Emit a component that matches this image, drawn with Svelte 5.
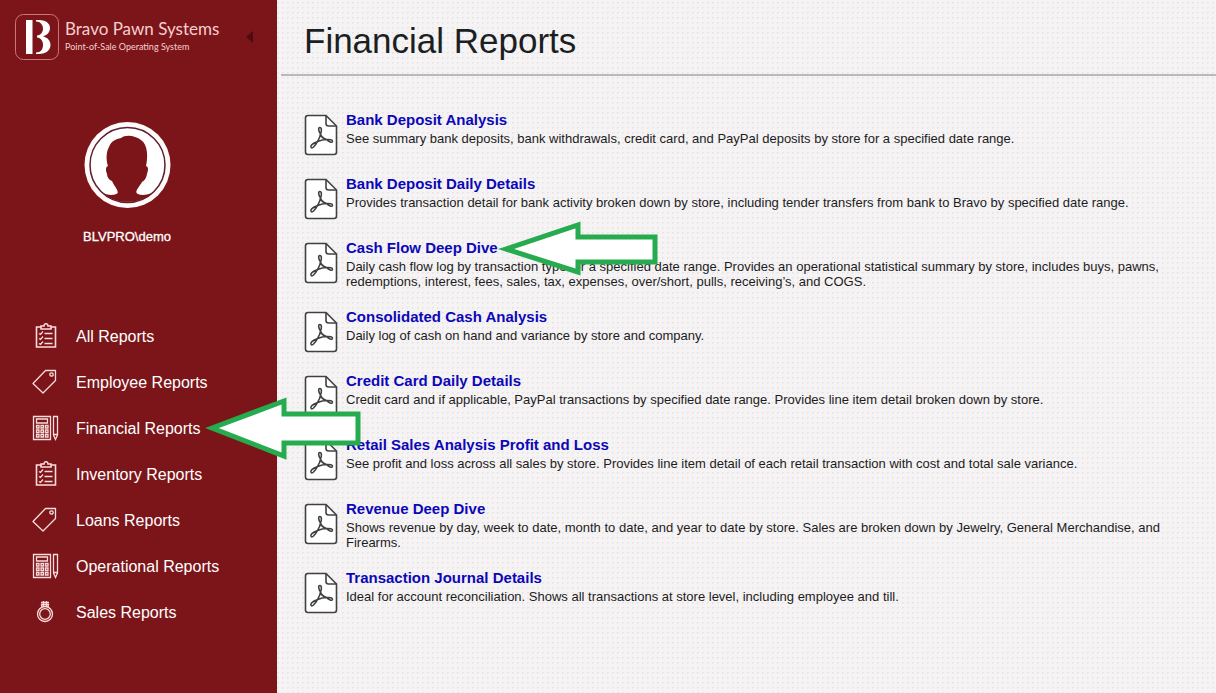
<script>
  const navigation = [
    { label: 'All Reports', icon: 'clipboard' },
    { label: 'Employee Reports', icon: 'tag' },
    { label: 'Financial Reports', icon: 'calculator', pointer: true },
    { label: 'Inventory Reports', icon: 'clipboard' },
    { label: 'Loans Reports', icon: 'tag' },
    { label: 'Operational Reports', icon: 'calculator' },
    { label: 'Sales Reports', icon: 'ring' }
  ];

  const reports = [
    { title: 'Bank Deposit Analysis', text: 'See summary bank deposits, bank withdrawals, credit card, and PayPal deposits by store for a specified date range.' },
    { title: 'Bank Deposit Daily Details', text: 'Provides transaction detail for bank activity broken down by store, including tender transfers from bank to Bravo by specified date range.' },
    { title: 'Cash Flow Deep Dive', text: 'Daily cash flow log by transaction type for a specified date range. Provides an operational statistical summary by store, includes buys, pawns, redemptions, interest, fees, sales, tax, expenses, over/short, pulls, receiving’s, and COGS.', pointer: true },
    { title: 'Consolidated Cash Analysis', text: 'Daily log of cash on hand and variance by store and company.' },
    { title: 'Credit Card Daily Details', text: 'Credit card and if applicable, PayPal transactions by specified date range. Provides line item detail broken down by store.' },
    { title: 'Retail Sales Analysis Profit and Loss', text: 'See profit and loss across all sales by store. Provides line item detail of each retail transaction with cost and total sale variance.' },
    { title: 'Revenue Deep Dive', text: 'Shows revenue by day, week to date, month to date, and year to date by store. Sales are broken down by Jewelry, General Merchandise, and Firearms.' },
    { title: 'Transaction Journal Details', text: 'Ideal for account reconciliation. Shows all transactions at store level, including employee and till.' }
  ];
</script>

<div class="app">
  <aside class="sidebar">
    <header class="brand">
      <svg class="logo" width="46" height="48" viewBox="0 0 46 48" aria-hidden="true">
        <rect x="1.500" y="1.500" width="43" height="45" rx="8" fill="none" stroke="#c9777c" />
        <path d="M12 7h6.500v34H12z" fill="#fff" />
        <path d="M22 7h3c7.500 0 11 4 11 8 0 4-2.500 7-7 8.500 5 1 7.500 4.500 7.500 8.500 0 5-4.500 9-11.500 9h-3v-1.500c5 0 7-3.500 7-7.500s-2-7-6-7.500v-2c4-.500 6-3.500 6-7s-2.500-7-7-7z" fill="#fff" />
      </svg>
      <div class="brand-text">
        <span class="brand-name">Bravo Pawn Systems</span>
        <span class="brand-sub">Point-of-Sale Operating System</span>
      </div>
      <button class="collapse" aria-label="Collapse menu">
        <svg width="7" height="12" viewBox="0 0 7 12"><path d="M7 0v12L0 6z" fill="#500b10" /></svg>
      </button>
    </header>

    <div class="profile">
      <svg width="88" height="88" viewBox="0 0 88 88" aria-hidden="true">
        <circle cx="44.500" cy="44" r="43" fill="#fffafa" />
        <circle cx="44.500" cy="44" r="37.500" fill="#fff" stroke="#5d2030" stroke-width="1.500" />
        <path d="M35 79V73C35 68 31 65 29 60C26 59 24 56 24 53C23 50 22 46 25 45C23 39 23 31 26 26C28 20 33 18 38 17C43 13 53 15 58 19C65 23 65 37 63 45C66 46 65 50 64 53C63 58 61 60 59 61C57 65 53 68 53 73V79C51 81 37 81 35 79Z" fill="#7c151a" />
        <path d="M18 71C25 75 35 75 35.500 70L53 70C53 75 63 75 71 71C57 84 32 84 18 71Z" fill="#7c151a" />
      </svg>
      <span class="user">BLVPRO\demo</span>
    </div>

    <nav class="menu" aria-label="Reports">
      {#each navigation as item}
        <a class="menu-item" href="#menu">
          <svg class="menu-icon" width="28" height="28" viewBox="0 0 28 28" aria-hidden="true">
            {#if item.icon === 'clipboard'}
              <path d="M10 4H5.500v20h19V4H20M10 6v-3h3C13 0 17 0 17 3h3v3z" stroke-width="1.600" />
              <path d="M8 10.500l1.500 1 2.500-3M8 15.500l1.500 1 2.500-3M8 20.500l1.500 1 2.500-3M13.500 10.500h8M13.500 15.500h8M13.500 20.500h8" />
            {:else if item.icon === 'tag'}
              <path d="M2 14.500L14.500 1.500H24.500V11.500L12 24z" stroke-linejoin="round" />
              <circle cx="20.500" cy="5.500" r="1.700" />
            {:else if item.icon === 'calculator'}
              <path d="M2.500 1.500h17v23h-17zM5.500 4h11v4h-11z" />
              <path d="M5.500 10.500H8V13H5.500zM10 10.500h2.500V13H10zM14.500 10.500H17V13h-2.500zM5.500 15H8v2.500H5.500zM10 15h2.500v2.500H10zM14.500 15H17v2.500h-2.500zM5.500 19.500H8V22H5.500zM10 19.500h2.500V22H10zM14.500 19.500H17V22h-2.500z" />
              <path d="M22.500 1.500h4v18.500l-2 4.500l-2-4.500zM22.500 19.500h4" />
            {:else}
              <circle cx="14" cy="15" r="7.500" />
              <circle cx="14" cy="15" r="5.300" />
              <path d="M11 8L10.500 5.500h7L17 8M10 3.500h8M12.500 2v5.500M15.500 2v5.500" />
            {/if}
          </svg>
          <span>{item.label}</span>
          {#if item.pointer}
            <svg class="pointer pointer-large" width="158" height="64" viewBox="0 0 158 64" aria-hidden="true">
              <path d="M9 31L81 4V17H155V46H81V59z" fill="#fff" stroke="#26ab4f" stroke-width="5" />
            </svg>
          {/if}
        </a>
      {/each}
    </nav>
  </aside>

  <main class="content">
    <h1>Financial Reports</h1>
    <ul class="reports">
      {#each reports as report}
        <li class="report">
          <svg class="pdf" width="34" height="42" viewBox="0 0 34 42" aria-hidden="true">
            <path d="M4 1.500H22L32.500 12V38Q32.500 40.500 30 40.500H4Q1.500 40.500 1.500 38V4Q1.500 1.500 4 1.500z" fill="#fff" stroke="#414141" stroke-width="1.600" />
            <path d="M22 1.500V9.500Q22 12 24.500 12H32.500" fill="none" stroke="#414141" stroke-width="1.600" />
            <path d="M16.500 20C14.500 17 14 13.500 15.800 13.500C17.800 13.500 17.800 17 16.500 20C16 24 12.500 30 9.500 33C7.500 34.800 6 33 7.500 31C9.500 28.500 17 25.800 22.500 25.500C26 25.200 28.800 26 28.500 27.500C28 29.200 25 28 22.500 25.500C19.500 24.500 17 22.500 16.500 20z" fill="none" stroke="#414141" stroke-width="1.600" stroke-linejoin="round" />
          </svg>
          <div class="report-text">
            <div class="title-line">
              <a href="#report">{report.title}</a>
              {#if report.pointer}
                <svg class="pointer pointer-small" width="162" height="56" viewBox="0 0 162 56" aria-hidden="true">
                  <path d="M9 28L81 4V16H158V41H81V51z" fill="#fff" stroke="#26ab4f" stroke-width="5" />
                </svg>
              {/if}
            </div>
            <p>{report.text}</p>
          </div>
        </li>
      {/each}
    </ul>
  </main>
</div>

<style>
  :global(body) {
    margin: 0;
    font-family: "Liberation Sans", Arial, sans-serif;
  }
  .app {
    display: flex;
    min-height: 100vh;
    background-color: #f5f3f4;
    background-image: radial-gradient(circle, #e9e5e7 1px, transparent 1px);
    background-size: 5px 5px;
  }
  .sidebar {
    flex: 0 0 277px;
    background: #7c151a;
    color: #fff;
  }
  .brand {
    display: flex;
    align-items: center;
    height: 74px;
    padding-left: 14px;
    border-bottom: 1px solid #76141a;
  }
  .brand-text {
    display: flex;
    flex-direction: column;
    flex: 1;
    padding-left: 5px;
    font-family: Lato, sans-serif;
    color: #f6cfcf;
  }
  .brand-name {
    font-size: 17px;
    line-height: 20px;
  }
  .brand-sub {
    font-size: 9px;
    line-height: 16px;
  }
  .collapse {
    display: flex;
    padding: 0;
    margin-right: 24px;
    border: 0;
    background: none;
  }
  .profile {
    display: flex;
    flex-direction: column;
    align-items: center;
    width: 254px;
    padding-top: 46px;
  }
  .user {
    margin-top: 20px;
    font-size: 13px;
    line-height: 16px;
    -webkit-text-stroke: 0.3px #fff;
  }
  .menu {
    display: flex;
    flex-direction: column;
    padding: 69px 0 0 31px;
  }
  .menu-item {
    position: relative;
    display: flex;
    align-items: center;
    gap: 17px;
    height: 46px;
    color: #fff;
    font-size: 16px;
    text-decoration: none;
  }
  .menu-icon {
    fill: none;
    stroke: #fbdcdc;
    stroke-width: 1.3;
  }
  .pointer {
    position: absolute;
    z-index: 2;
  }
  .pointer-large {
    left: 172px;
    top: -9px;
  }
  .content {
    flex: 1;
    min-width: 0;
    padding-left: 4px;
  }
  h1 {
    margin: 0;
    height: 74px;
    padding: 0 23px;
    border-bottom: 2px solid #bab8b9;
    color: #1c1f22;
    font-size: 35px;
    font-weight: 400;
    line-height: 82px;
  }
  .reports {
    display: flex;
    flex-direction: column;
    gap: 18px;
    margin: 0;
    padding: 34px 32px 24px 23px;
    list-style: none;
  }
  .report {
    display: flex;
    gap: 8px;
  }
  .pdf {
    flex: none;
    margin-top: 4px;
  }
  .title-line {
    position: relative;
    width: max-content;
    font-size: 15px;
    font-weight: 700;
    line-height: 19px;
  }
  .title-line a {
    color: #0c08b8;
    text-decoration: none;
  }
  .pointer-small {
    left: 151px;
    top: -17px;
  }
  p {
    margin: 2px 0 0;
    color: #1c1c1c;
    font-size: 13px;
    line-height: 15px;
  }
</style>
